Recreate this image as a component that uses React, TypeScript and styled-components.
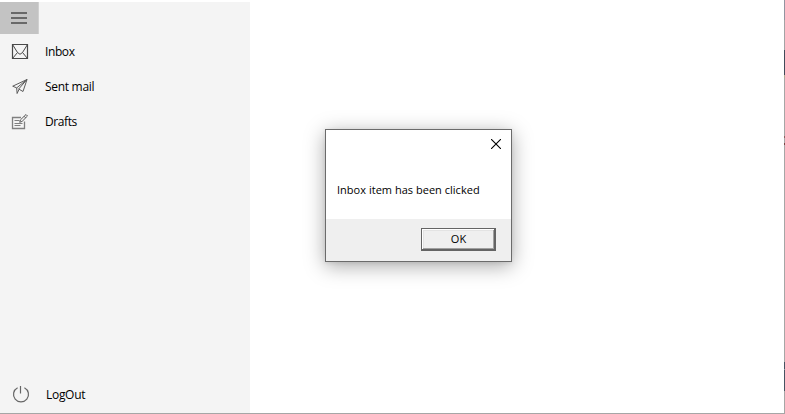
import React from "react";
import styled, { createGlobalStyle } from "styled-components";

const GlobalStyle = createGlobalStyle`
  * { box-sizing: border-box; }
  body { margin: 0; background: #fff; overflow: hidden; }
`;

const Window = styled.div`
  width: 785px;
  height: 414px;
  display: grid;
  grid-template-columns: 250px 1fr 1px;
  grid-template-rows: 411px 1px;
  padding-top: 2px;
  background: #fff;
  color: #000;
  font: 12px/16px "Open Sans", "Noto Sans", sans-serif;
`;

const Sidebar = styled.nav`
  display: flex;
  flex-direction: column;
  padding-bottom: 1px;
  background: #f4f4f4;
`;

const MenuButton = styled.button`
  width: 39px;
  height: 32px;
  padding: 0 1px 0 0;
  border: 0;
  border-right: 1px solid #d0d0d0;
  background: #c3c3c3;
  display: flex;
  align-items: center;
  justify-content: center;
`;

const Items = styled.div`
  flex: 1;
`;

const Item = styled.div<{ $inset?: number }>`
  height: 35px;
  padding-left: ${(p) => 11 + (p.$inset ?? 0)}px;
  display: flex;
  align-items: center;
  gap: 16px;
  svg { display: block; flex: none; margin-top: -1px; }
`;

const Label = styled.span<{ $spacing: number }>`
  letter-spacing: ${(p) => p.$spacing}px;
  white-space: nowrap;
`;

const Content = styled.main`
  display: flex;
  padding: 127px 0 0 75px;
`;

const RightEdge = styled.div`
  grid-column: 3;
  grid-row: 1 / span 2;
  margin-top: -2px;
  background: linear-gradient(
    #9294a0 0 20px, #a3a3a5 20px 50px, #414b5a 50px 75px, #b0aa90 75px 78px,
    #a6a6a6 78px 136px, #8c6060 136px 138px, #a6a6a6 138px 143px, #7b4545 143px 145px,
    #a6a6a6 145px 362px, #465362 362px 369px, #8793a0 369px 370px, #465362 370px 391px,
    #a6a6a6 391px
  );
`;

const BottomEdge = styled.div`
  grid-column: 1 / span 2;
  background: #a6a6a6;
`;

const Dialog = styled.section`
  width: 187px;
  height: 133px;
  border: 1px solid #6b6b6b;
  background: #fff;
  box-shadow: 0 4px 19px rgba(0, 0, 0, 0.34), 0 1px 4px rgba(0, 0, 0, 0.08);
  display: flex;
  flex-direction: column;
  font-size: 11px;
`;

const TitleBar = styled.header`
  height: 30px;
  padding: 9px 10px 0 0;
  display: flex;
  justify-content: flex-end;
`;

const Message = styled.div`
  flex: 1;
  padding: 22px 0 0 11px;
`;

const Footer = styled.footer`
  height: 42px;
  padding: 9px 15px 0 0;
  display: flex;
  justify-content: flex-end;
  background: #efefef;
`;

const OkButton = styled.button`
  width: 75px;
  height: 23px;
  padding: 0 0 1px 1px;
  border: solid #646464;
  border-width: 1px 2px 2px 1px;
  background: #efefef;
  box-shadow: inset 1px 1px #fff, inset -1px -1px #a0a0a0, inset 2px 2px #e3e3e3;
  color: #000;
  font: 11px/16px "Open Sans", "Noto Sans", sans-serif;
`;

const MenuIcon = () => (
  <svg width="16" height="14" viewBox="0 0 16 14" fill="none" stroke="#686868" strokeWidth="2">
    <path d="M0 2h16M0 7h16M0 12h16" />
  </svg>
);

const InboxIcon = () => (
  <svg width="18" height="18" viewBox="0 0 18 18" fill="none" stroke="#484848">
    <path d="M1.5 2.5h15v14h-15z" strokeWidth="1.2" />
    <path d="M1.5 2.5 6.5 10.5 9 12.3l2.5-1.8 5-8M1.5 16.5l5-6M16.5 16.5l-5-6" />
  </svg>
);

const SendIcon = () => (
  <svg width="18" height="18" viewBox="0 0 18 18" fill="none" stroke="#5b5b5b" strokeLinejoin="round">
    <path d="M16 2.5 1.7 9.2l4 1.7L16 2.5l-4 12-4.3-2.5L16 2.5M5.7 10.9l.4 5.6 2-4.3" />
  </svg>
);

const DraftIcon = () => (
  <svg width="18" height="18" viewBox="0 0 18 18" fill="none" stroke="#808080">
    <path d="M10 5.5H1.5v11h12v-7" strokeWidth="1.3" />
    <path d="M3.5 8.5h5M3.5 11.5h8M3.5 13.5h6" />
    <path d="m8.7 10.3.8-2.5 5.5-5.3 1.5 1.5-5.4 5.4zM13 4.2l1.7 1.7" stroke="#5c5c5c" />
  </svg>
);

const PowerIcon = () => (
  <svg width="18" height="18" viewBox="0 0 18 18" fill="none" stroke="#666" strokeWidth="1.2">
    <path d="M5.6 2.7a7.5 7.5 0 1 0 6.8 0" />
    <path d="M8.5 1v7.5" />
  </svg>
);

const CloseIcon = () => (
  <svg width="10" height="10" viewBox="0 0 10 10" fill="none" stroke="#000" strokeWidth="1.1">
    <path d="m0 0 10 10M10 0 0 10" />
  </svg>
);

export default function App() {
  return (
    <>
      <GlobalStyle />
      <Window>
        <Sidebar>
          <MenuButton aria-label="Menu"><MenuIcon /></MenuButton>
          <Items>
            <Item><InboxIcon /><Label $spacing={-0.4}>Inbox</Label></Item>
            <Item><SendIcon /><Label $spacing={-0.3}>Sent mail</Label></Item>
            <Item><DraftIcon /><Label $spacing={-0.4}>Drafts</Label></Item>
          </Items>
          <Item $inset={1}><PowerIcon /><Label $spacing={-0.3}>LogOut</Label></Item>
        </Sidebar>
        <Content>
          <Dialog role="dialog">
            <TitleBar><CloseIcon /></TitleBar>
            <Message><Label $spacing={0.02}>Inbox item has been clicked</Label></Message>
            <Footer><OkButton>OK</OkButton></Footer>
          </Dialog>
        </Content>
        <RightEdge />
        <BottomEdge />
      </Window>
    </>
  );
}
